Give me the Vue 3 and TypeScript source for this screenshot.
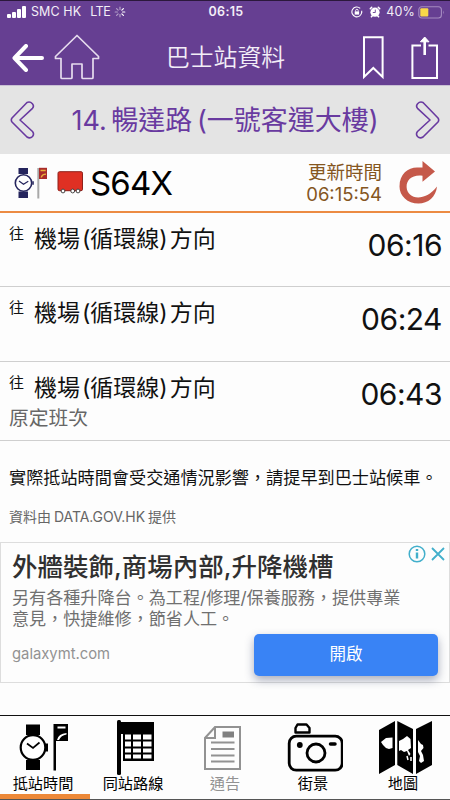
<script setup lang="ts">
interface Arrival {
  time: string
  note?: string
}

interface Tab {
  id: string
  label: string
  active?: boolean
  disabled?: boolean
}

const arrivals: Arrival[] = [
  { time: '06:16' },
  { time: '06:24' },
  { time: '06:43', note: '原定班次' },
]

const tabs: Tab[] = [
  { id: 'eta', label: '抵站時間', active: true },
  { id: 'routes', label: '同站路線' },
  { id: 'notice', label: '通告', disabled: true },
  { id: 'street', label: '街景' },
  { id: 'map', label: '地圖' },
]

const spokes = [0, 45, 90, 135, 180, 225, 270, 315]
</script>

<template>
  <div class="screen">
    <header class="top">
      <div class="status">
        <div class="status-side">
          <svg class="signal" width="19" height="13" viewBox="0 0 19 13" fill="#fff">
            <rect x="0" y="8" width="4" height="4" rx="1" />
            <rect x="5" y="6" width="4" height="6" rx="1" />
            <rect x="10" y="3" width="4" height="9" rx="1" />
            <rect x="15" y="0" width="4" height="12" rx="1" />
          </svg>
          <span class="carrier">SMC HK</span>
          <span class="network">LTE</span>
          <svg class="spinner" width="12" height="12" viewBox="-6 -6 12 12" stroke="#fff" stroke-width="1.2" stroke-linecap="round">
            <line v-for="(a, i) in spokes" :key="a" x1="0" y1="-2.6" x2="0" y2="-4.8" :transform="`rotate(${a})`" :opacity="i > 0 && i < 4 ? 1 : 0.5" />
          </svg>
        </div>
        <span class="clock">06:15</span>
        <div class="status-side right">
          <svg width="12" height="12" viewBox="0 0 12 12" fill="none" stroke="#fff">
            <path d="M10.7 6A4.9 4.9 0 1 1 9.2 2.4M10.7 7V4.8" stroke-width="1.1" />
            <path d="M4.6 5.6V4.6a1.3 1.3 0 0 1 2.6 0v1" stroke-width=".9" />
            <rect x="3.7" y="5.4" width="4.4" height="3.2" fill="#fff" stroke="none" />
          </svg>
          <svg class="alarm" width="12" height="12" viewBox="0 0 12 12">
            <circle cx="6" cy="6.2" r="4.6" fill="#fff" />
            <path d="M1.300 2.700 2.700 1.300M10.700 2.700 9.300 1.300M2.400 10.800l1-1M9.600 10.800l-1-1" stroke="#fff" stroke-width="1.6" stroke-linecap="round" />
            <path d="M6.300 3.600v2.900H3.800" fill="none" stroke="#663f92" stroke-width=".9" />
          </svg>
          <span class="percent">40%</span>
          <svg class="battery" width="27" height="13" viewBox="0 0 27 13">
            <rect x=".8" y=".8" width="22.600" height="11.200" rx="3" fill="none" stroke="#a58bc0" stroke-width="1.1" />
            <rect x="2.300" y="2.300" width="8" height="8.200" rx="1" fill="#f9d749" />
            <path d="M25 4.500q1.500 1.800 0 3.800z" fill="#a58bc0" />
          </svg>
        </div>
      </div>
      <nav class="nav">
        <div class="nav-side">
          <svg width="32" height="28" viewBox="0 0 32 28" fill="none" stroke="#fff" stroke-width="4" stroke-linecap="round" stroke-linejoin="round">
            <path d="M14 2 2.500 14 14 26M3 14h27" />
          </svg>
          <svg class="home" width="46" height="46" viewBox="0 0 46 46" fill="none" stroke="#e6dcee" stroke-width="1.700" stroke-linejoin="round">
            <path d="M23 1.500 44.500 22.500V24.500H39V43.500q0 1-1 1H29q-1 0-1-1V30H18V43.500q0 1-1 1H8q-1 0-1-1V24.500H1.500V22.500z" />
          </svg>
        </div>
        <h1 class="title">巴士站資料</h1>
        <div class="nav-side right">
          <svg width="21" height="44" viewBox="0 0 21 44" fill="none" stroke="#fff" stroke-width="2">
            <path d="M1 1.200H19.600V41L10.300 32 1 41z" />
          </svg>
          <svg class="share" width="28" height="44" viewBox="0 0 28 44" fill="none" stroke="#fff" stroke-width="2">
            <path d="M10 9.600H1.400V42H26V9.600H17.500" />
            <path d="M13.700 5V19" stroke-width="2.600" />
            <path d="M13.700 1 18 5.800H9.400z" fill="#fff" stroke-linejoin="round" stroke-width="1" />
          </svg>
        </div>
      </nav>
    </header>

    <section class="stop">
      <svg width="26" height="38" viewBox="0 0 26 38" fill="none" stroke="#693aa0" stroke-width="1.600" stroke-linejoin="round">
        <path d="M17 1.500Q20 .2 22.400 2.700Q24.400 5 22.500 7.300L10 19 22.500 30.500Q24.500 33 22.500 35.500Q20 38 17 36L2 21Q.6 19 2 17z" />
      </svg>
      <h2 class="stop-name">14. 暢達路 (一號客運大樓)</h2>
      <svg class="next" width="26" height="38" viewBox="0 0 26 38" fill="none" stroke="#693aa0" stroke-width="1.600" stroke-linejoin="round">
        <path d="M17 1.500Q20 .2 22.400 2.700Q24.400 5 22.500 7.300L10 19 22.500 30.500Q24.500 33 22.500 35.500Q20 38 17 36L2 21Q.6 19 2 17z" />
      </svg>
    </section>

    <section class="route">
      <svg class="watch" width="34" height="32" viewBox="0 0 34 32">
        <path d="M4.500 1H14V7H4.500zM4.500 24.500H14V31H4.500z" fill="#25255d" />
        <circle cx="9.500" cy="16" r="8.200" fill="#fff" stroke="#25255d" stroke-width="1.600" />
        <path d="M5 14 9.500 17.200 14.300 14.300" fill="none" stroke="#25255d" stroke-width="1.200" />
        <path d="M18.300 14.300h1.500v3.500h-1.500z" fill="#25255d" />
        <path d="M24.300 1V31.500" stroke="#a9a9a9" stroke-width="2" />
        <path d="M25 .8H33V12H25z" fill="#aa2c2b" />
        <path d="M26.500 2.800h5.200v1.500h-5.200zM26.500 10.500q1-4 5.500-4v1.200q-3.500.2-4 2.800z" fill="#eab33c" />
      </svg>
      <svg class="bus" width="27" height="23" viewBox="0 0 27 23">
        <rect x="1" y=".7" width="24.500" height="19" rx="1.500" fill="#df3023" stroke="#8f211b" stroke-width="1" />
        <g fill="#fff" stroke="#333" stroke-width=".9">
          <circle cx="6" cy="20" r="1.900" /><circle cx="15.700" cy="20" r="1.900" /><circle cx="21" cy="20" r="1.900" />
        </g>
      </svg>
      <span class="route-no">S64X</span>
      <div class="updated">
        <span class="updated-label">更新時間</span>
        <span class="updated-time">06:15:54</span>
      </div>
      <svg class="refresh" width="39" height="43" viewBox="0 0 39 43" fill="#c5594a">
        <path d="M23.500 0 36 10.500 23.500 20.800V14.800C13 13.500 7.500 19 7.600 26C8 38 25 42 38 25.500C37 36 29 42.500 19.500 42.500C8.500 42.500.5 35 .5 25.500C.5 13 9 6.500 18 6.500H23.500z" />
      </svg>
    </section>

    <main>
      <article v-for="row in arrivals" :key="row.time" class="arrival" :class="{ noted: row.note }">
        <div class="heading">
          <span class="to">往</span>
          <span class="destination">機場 (循環線) 方向</span>
        </div>
        <span v-if="row.note" class="note">{{ row.note }}</span>
        <time class="eta">{{ row.time }}</time>
      </article>
      <p class="advice">實際抵站時間會受交通情況影響，請提早到巴士站候車。</p>
      <p class="source">資料由<span class="domain">DATA.GOV.HK</span>提供</p>
    </main>

    <aside class="ad">
      <h3 class="ad-title">外牆裝飾,商場內部,升降機槽</h3>
      <p class="ad-text">另有各種升降台。為工程/修理/保養服務，提供專業<br>意見，快捷維修，節省人工。</p>
      <div class="ad-foot">
        <span class="ad-site">galaxymt.com</span>
        <button class="ad-open" type="button">開啟</button>
      </div>
      <svg class="ad-marks" width="37" height="18" viewBox="0 0 37 18" fill="none" stroke="#42afcb" stroke-width="1.500">
        <circle cx="9" cy="9" r="7.800" />
        <path d="M9 7.500V13.500M9 4V6" stroke-width="2.400" />
        <path d="M24 3 36 15M36 3 24 15" stroke-width="1.800" />
      </svg>
    </aside>

    <footer class="tabs">
      <div v-for="tab in tabs" :key="tab.id" class="tab" :class="{ active: tab.active, disabled: tab.disabled }">
        <svg v-if="tab.id === 'eta'" class="icon" width="56" height="58" viewBox="0 0 56 58">
          <path d="M9 6.500H23V17H9zM9 42H23V52H9z" />
          <circle cx="16" cy="29.500" r="12.300" fill="#fff" stroke="#000" stroke-width="2.200" />
          <path d="M28 25.500h3v8h-3z" />
          <path d="M10 25.500 16 30 22.500 24.500" fill="none" stroke="#000" stroke-width="1.700" />
          <path d="M36.500 6H51V23H39V52.500H36.500z" />
          <path d="M40.500 8.500H48.500v2H40.500zM40 22q1.500-6.500 9.500-7v1.500q-5.500.8-7.500 5.500z" fill="#fff" />
        </svg>
        <svg v-else-if="tab.id === 'routes'" class="icon" width="56" height="58" viewBox="0 0 56 58">
          <rect x="10" y="2" width="4" height="55" rx="1.500" />
          <path d="M14 4H47V43H16V16H14z" />
          <path d="M18 16.500h6v5h-6zM26 16.500h8v5h-8zM36 16.500h8.500v5H36zM18 23.500h6v5h-6zM26 23.500h8v5h-8zM36 23.500h8.500v5H36zM18 30.500h6v4h-6zM26 30.500h8v4h-8zM36 30.500h8.500v4H36zM18 36.500h6v4h-6zM26 36.500h8v4h-8zM36 36.500h8.500v4H36z" fill="#fff" />
        </svg>
        <svg v-else-if="tab.id === 'notice'" class="icon" width="56" height="58" viewBox="0 0 56 58" fill="none" stroke="#929292" stroke-width="2">
          <path d="M18 9H43V51H8V20zM18 9V20H8" />
          <path d="M25.500 13.500H37v6H25.500z" fill="#808080" stroke="none" />
          <path d="M14 24.500H37.500M14 31H37.500M14 37.500H37.500M14 43.500H37.500" />
        </svg>
        <svg v-else-if="tab.id === 'street'" class="icon" width="56" height="58" viewBox="0 0 56 58" fill="none" stroke="#000" stroke-width="2.800">
          <rect x="2.200" y="18.200" width="53" height="34" rx="7" />
          <path d="M8.500 14.500V10L10.500 6.500H19.500L22.500 10V14.500z" stroke-width="2.400" stroke-linejoin="round" />
          <circle cx="29" cy="35" r="9" />
          <circle cx="12.800" cy="27" r="2.900" fill="#000" stroke="none" />
          <path d="M43.500 26H48" stroke-width="3.500" stroke-linecap="round" />
        </svg>
        <svg v-else class="icon" width="56" height="58" viewBox="0 0 56 58">
          <path d="M2 12 18 3V47L2 56zM20.300 3 36 11V56L20.300 47zM39 11 55 3V47L39 56z" />
          <path d="M4 24 9 20 15.500 19.500V30L12 31Q8 30 6 27zM22 23 26 21 30 18 33.500 21 34 30 31 32 33.500 36 32 38 30 33 27 34 24 32 22 33zM41 22 44 26 46 27 46.500 30 44 33 46 37 47 43 44 45 42 43 43 38 41 34z" fill="#fff" />
          <path d="M30 38l1 4M34 39v4" stroke="#fff" stroke-width="1.500" />
        </svg>
        <span class="label">{{ tab.label }}</span>
      </div>
    </footer>
  </div>
</template>

<style>
body {
  margin: 0;
  background: #fdfdfd;
}
</style>

<style scoped>
* {
  box-sizing: border-box;
}

.screen {
  width: 450px;
  height: 800px;
  overflow: hidden;
  display: flex;
  flex-direction: column;
  background: #fdfdfd;
  color: #111;
  font-family: Inter, "Noto Sans CJK TC", sans-serif;
}

svg {
  flex: none;
  display: block;
}

h1, h2, h3, p {
  margin: 0;
  font-weight: 400;
  white-space: nowrap;
}

.top {
  flex: none;
  height: 85px;
  background: #663f92;
  border-top: 1px solid #2b183c;
  color: #f3eef7;
}

.status {
  height: 22px;
  padding: 0 5px 0 7px;
  display: grid;
  grid-template-columns: 1fr auto 1fr;
  align-items: center;
  font-size: 12.500px;
  line-height: 22px;
}

.status-side,
.nav-side {
  display: flex;
  align-items: center;
}

.right {
  justify-content: flex-end;
}

.signal {
  margin-right: 5px;
}

.network {
  margin: 0 4px 0 9px;
  letter-spacing: -0.500px;
}

.carrier {
  letter-spacing: 0.100px;
}

.clock {
  font-weight: 600;
  letter-spacing: 0.350px;
}

.alarm {
  margin: 0 5px 0 6px;
}

.percent {
  letter-spacing: 0.200px;
  margin-right: 3px;
}

.nav {
  height: 62px;
  padding: 7px 11px 0 12px;
  display: grid;
  grid-template-columns: 1fr auto 1fr;
  align-items: center;
}

.home {
  margin: -1px 0 0 10px;
}

.title {
  font-size: 23.800px;
  line-height: 32px;
  font-weight: 350;
}

.share {
  margin-left: 27px;
}

.stop {
  flex: none;
  height: 69px;
  border-top: 1px solid #c9c0d4;
  background: #e4e4e4;
  padding: 0 10px;
  display: flex;
  align-items: center;
  justify-content: space-between;
  color: #693aa0;
}

.stop-name {
  padding-top: 2px;
  font-size: 27px;
  line-height: 40px;
  word-spacing: -3px;
}

.next {
  transform: scaleX(-1);
}

.route {
  flex: none;
  height: 59px;
  border-bottom: 2px solid #ec8b43;
  padding: 0 12px 0 14px;
  display: flex;
  align-items: center;
}

.bus {
  margin: 0 6px 0 9px;
}

.route-no {
  font-size: 33px;
  line-height: 40px;
  letter-spacing: -0.800px;
  color: #000;
}

.updated {
  margin-left: auto;
  margin-right: 17px;
  display: flex;
  flex-direction: column;
  align-items: flex-end;
  color: #85561f;
  font-size: 18.500px;
  line-height: 22px;
}

.arrival {
  height: 75px;
  border-bottom: 1px solid #cfcfcf;
  padding: 8px 8px 0 9px;
  display: grid;
  grid-template-columns: 1fr auto;
  grid-template-rows: 36px auto;
}

.arrival:first-child {
  height: 74px;
}

.arrival.noted {
  height: 79px;
}

.heading {
  display: flex;
}

.to {
  width: 25px;
  font-size: 15px;
  line-height: 26px;
}

.destination {
  font-size: 23px;
  line-height: 36px;
  word-spacing: -4.500px;
}

.eta {
  grid-column: 2;
  grid-row: 1;
  font-size: 30px;
  line-height: 48px;
  letter-spacing: -0.500px;
}

.note {
  grid-column: 1;
  grid-row: 2;
  font-size: 19.800px;
  line-height: 24px;
  color: #666;
}

.advice {
  padding: 22px 0 0 9px;
  font-size: 17.150px;
  line-height: 30px;
}

.source {
  padding: 12px 0 0 9px;
  font-size: 14px;
  line-height: 24px;
  color: #666;
}

.domain {
  margin: 0 3px;
  letter-spacing: -0.080px;
}

.ad {
  flex: none;
  position: relative;
  height: 141px;
  margin-top: 13px;
  border: 1px solid #ddd;
  padding: 6px 11px 0 11px;
}

.ad-title {
  font-size: 25.500px;
  line-height: 35px;
  font-weight: 500;
  color: #303030;
}

.ad-text {
  margin-top: 3px;
  font-size: 17.100px;
  line-height: 21px;
  color: #707070;
}

.ad-foot {
  display: flex;
  justify-content: space-between;
  margin-top: 5px;
}

.ad-site {
  font-size: 14.800px;
  line-height: 40px;
  color: #929292;
}

.ad-open {
  width: 184px;
  height: 42px;
  border: 0;
  padding: 0 0 4px;
  border-radius: 5px;
  background: #3983f5;
  box-shadow: 0 4px 10px rgba(40, 50, 90, 0.4);
  color: #fff;
  font: 400 16.500px "Noto Sans CJK TC", sans-serif;
}

.ad-marks {
  position: absolute;
  top: 2px;
  right: 4px;
}

.tabs {
  flex: none;
  height: 85px;
  margin-top: auto;
  border-top: 1px solid #111;
  border-bottom: 1px solid #555;
  display: grid;
  grid-template-columns: repeat(5, 1fr);
}

.tab {
  display: flex;
  flex-direction: column;
  align-items: center;
  color: #000;
}

.icon {
  margin-top: 2px;
}

.label {
  margin-top: -1px;
  padding-right: 4px;
  font-size: 15.200px;
  line-height: 18px;
}

.active {
  border-bottom: 5px solid #ed8939;
}

.disabled {
  color: #929292;
}

.disabled .label {
  padding-right: 0;
}
</style>
